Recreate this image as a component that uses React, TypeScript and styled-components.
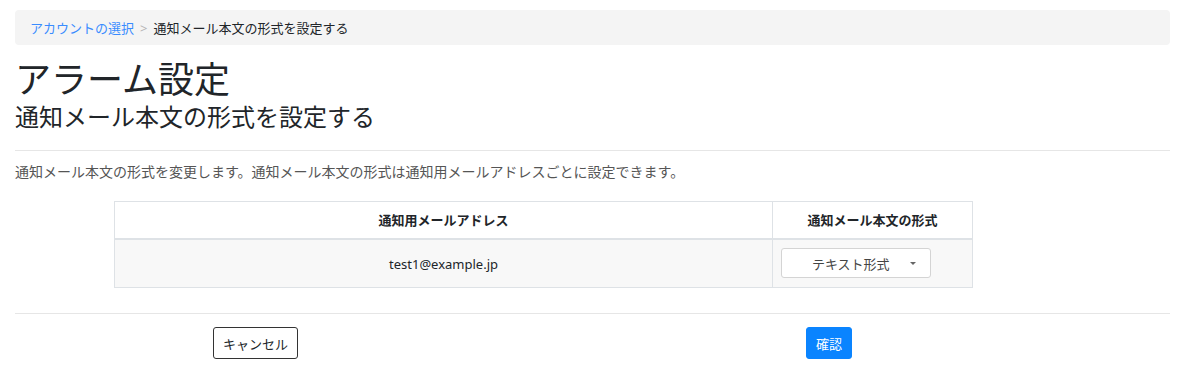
import React from "react";
import styled, { createGlobalStyle } from "styled-components";

const Global = createGlobalStyle`
  html, body { margin: 0; padding: 0; background: #fff; }
  body {
    font-family: "Noto Sans", "Noto Sans CJK JP", sans-serif;
    color: #212529;
  }
  * { box-sizing: border-box; }
`;

const Page = styled.div`
  padding: 10px 15px 20px;
`;

const Breadcrumb = styled.nav`
  display: flex;
  align-items: center;
  height: 35px;
  padding: 0 15px;
  background: #f4f4f4;
  border-radius: 4px;
  font-size: 13px;
  font-family: "Noto Sans CJK JP", sans-serif;
`;

const Crumb = styled.a`
  color: #3a8cff;
  text-decoration: none;
`;

const Sep = styled.span`
  color: #b5b5b5;
  padding: 0 6px;
  font-family: "Noto Sans", sans-serif;
`;

const Current = styled.span`
  color: #212529;
`;

const Title = styled.h1`
  margin: 9px 0 0;
  font-size: 36px;
  font-weight: 400;
  line-height: 46px;
  font-family: "Noto Sans CJK JP", sans-serif;
`;

const SubTitle = styled.h2`
  margin: 0;
  font-size: 24px;
  font-weight: 400;
  line-height: 32px;
  font-family: "Noto Sans CJK JP", sans-serif;
`;

const Rule = styled.hr<{ $top: number; $bottom: number }>`
  border: 0;
  border-top: 1px solid #e6e6e6;
  margin: ${(p) => `${p.$top}px 0 ${p.$bottom}px`};
`;

const Lead = styled.p`
  margin: 0;
  font-size: 14px;
  line-height: 20px;
  color: #555;
  font-family: "Noto Sans CJK JP", sans-serif;
`;

const Table = styled.table`
  width: 859px;
  margin: 20px 0 0 99px;
  border-collapse: collapse;
  font-size: 13px;
  font-family: "Noto Sans CJK JP", sans-serif;
`;

const Th = styled.th<{ $w?: number }>`
  height: 37px;
  border: 1px solid #dee2e6;
  border-bottom: 2px solid #dee2e6;
  font-weight: 700;
  text-align: center;
  padding: 0 8px;
  width: ${(p) => (p.$w ? `${p.$w}px` : "auto")};
`;

const Td = styled.td`
  height: 49px;
  border: 1px solid #dee2e6;
  background: #f8f8f8;
  text-align: center;
  padding: 0 8px;
`;

const Email = styled.span`
  font-family: "Noto Sans", sans-serif;
  font-size: 13px;
`;

const SelectBox = styled.div`
  display: flex;
  align-items: center;
  width: 150px;
  height: 30px;
  background: #fff;
  border: 1px solid #d4d4d4;
  border-radius: 3px;
  color: #444;
  font-size: 13px;
  padding: 0 14px 0 30px;
`;

const SelectText = styled.span`
  flex: 1;
  text-align: left;
`;

const Caret = styled.span`
  width: 0;
  height: 0;
  border-left: 3px solid transparent;
  border-right: 3px solid transparent;
  border-top: 3px solid #666;
`;

const Footer = styled.div`
  display: flex;
  justify-content: space-between;
  padding: 0 318px 0 198px;
`;

const Button = styled.button<{ $primary?: boolean }>`
  height: 32px;
  padding: 0 9px;
  font-size: 13px;
  font-family: "Noto Sans CJK JP", sans-serif;
  border-radius: 3px;
  cursor: pointer;
  border: 1px solid ${(p) => (p.$primary ? "#0a84ff" : "#333")};
  background: ${(p) => (p.$primary ? "#0a84ff" : "#fff")};
  color: ${(p) => (p.$primary ? "#fff" : "#212529")};
`;

export default function App() {
  return (
    <>
      <Global />
      <Page>
        <Breadcrumb>
          <Crumb href="#">アカウントの選択</Crumb>
          <Sep>&gt;</Sep>
          <Current>通知メール本文の形式を設定する</Current>
        </Breadcrumb>
        <Title>アラーム設定</Title>
        <SubTitle>通知メール本文の形式を設定する</SubTitle>
        <Rule $top={18} $bottom={10} />
        <Lead>通知メール本文の形式を変更します。通知メール本文の形式は通知用メールアドレスごとに設定できます。</Lead>
        <Table>
          <thead>
            <tr>
              <Th>通知用メールアドレス</Th>
              <Th $w={200}>通知メール本文の形式</Th>
            </tr>
          </thead>
          <tbody>
            <tr>
              <Td>
                <Email>test1@example.jp</Email>
              </Td>
              <Td>
                <SelectBox>
                  <SelectText>テキスト形式</SelectText>
                  <Caret />
                </SelectBox>
              </Td>
            </tr>
          </tbody>
        </Table>
        <Rule $top={25} $bottom={13} />
        <Footer>
          <Button>キャンセル</Button>
          <Button $primary>確認</Button>
        </Footer>
      </Page>
    </>
  );
}
